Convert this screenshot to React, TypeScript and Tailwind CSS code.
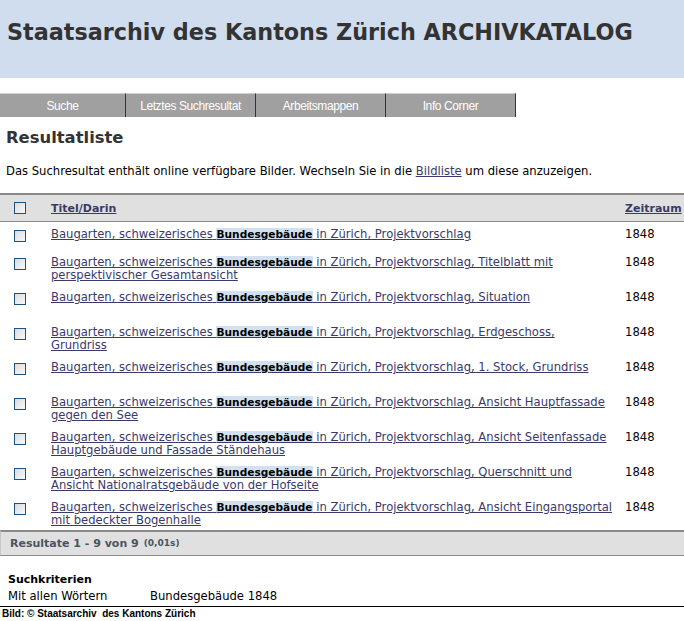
import React from 'react';

const rows: { rest: string; h: string }[] = [
  { rest: ' in Zürich, Projektvorschlag', h: 'h-[28px]' },
  { rest: ' in Zürich, Projektvorschlag, Titelblatt mit perspektivischer Gesamtansicht', h: 'h-[35px]' },
  { rest: ' in Zürich, Projektvorschlag, Situation', h: 'h-[35px]' },
  { rest: ' in Zürich, Projektvorschlag, Erdgeschoss, Grundriss', h: 'h-[35px]' },
  { rest: ' in Zürich, Projektvorschlag, 1. Stock, Grundriss', h: 'h-[35px]' },
  { rest: ' in Zürich, Projektvorschlag, Ansicht Hauptfassade gegen den See', h: 'h-[35px]' },
  { rest: ' in Zürich, Projektvorschlag, Ansicht Seitenfassade Hauptgebäude und Fassade Ständehaus', h: 'h-[35px]' },
  { rest: ' in Zürich, Projektvorschlag, Querschnitt und Ansicht Nationalratsgebäude von der Hofseite', h: 'h-[35px]' },
  { rest: ' in Zürich, Projektvorschlag, Ansicht Eingangsportal mit bedeckter Bogenhalle', h: 'h-[35px]' },
];

const Box = () => (
  <span className="block w-[12px] h-[12px] border border-[#1c5180] bg-gradient-to-br from-[#dcdcdc] to-[#f8f8f8]" />
);

const tabs = ['Suche', 'Letztes Suchresultat', 'Arbeitsmappen', 'Info Corner'];

export default function App() {
  return (
    <div className="w-[684px] h-[621px] bg-white overflow-hidden text-[#333] font-['DejaVu_Sans',sans-serif]">
      <header className="h-[78px] bg-[#cfddee] pl-[7px] pt-[18px]">
        <h1 className="text-[22.3px] leading-[28px] font-bold text-[#333]">
          Staatsarchiv des Kantons Zürich ARCHIVKATALOG
        </h1>
      </header>

      <nav className="mt-[15px] flex h-[24px] font-['Liberation_Sans',sans-serif] text-[12px] text-white tracking-[-0.4px]">
        {tabs.map((t) => (
          <a
            key={t}
            href="#"
            className="w-[130px] first:w-[126px] flex items-center justify-center bg-[#a0a0a0] border-t border-t-[#cfcfcf] border-r border-r-[#333]"
          >
            {t}
          </a>
        ))}
      </nav>

      <main className="px-[6px]">
        <h2 className="mt-[9px] text-[16.4px] font-bold leading-[24px] text-[#333]">Resultatliste</h2>
        <p className="mt-[14px] text-[11.6px] leading-[14px] text-black">
          Das Suchresultat enthält online verfügbare Bilder. Wechseln Sie in die{' '}
          <a href="#" className="underline text-[#3a3a6a]">Bildliste</a> um diese anzuzeigen.
        </p>
      </main>

      <div className="mt-[15px] text-[11.6px] leading-[13px]">
        <div className="h-[29px] flex items-center bg-[#e0e0e0] border-t-2 border-t-[#8a8a8a] border-b border-b-[#8a8a8a] text-[11px]">
          <div className="w-[51px] pl-[14px]"><Box /></div>
          <a href="#" className="flex-1 font-bold underline text-[#3a3a6a]">Titel/Darin</a>
          <a href="#" className="w-[59px] font-bold underline text-[#3a3a6a]">Zeitraum</a>
        </div>

        {rows.map((r, i) => (
          <div key={i} className={`${r.h} flex items-start pt-[6px]`}>
            <div className="w-[51px] pl-[14px] pt-[2px]"><Box /></div>
            <a href="#" className="w-[574px] pr-[12px] underline text-[#3a3a6a]">
              Baugarten, schweizerisches{' '}
              <b className="bg-[#d2e0f0] text-black text-[10.6px]">Bundesgebäude</b>
              {r.rest}
            </a>
            <span className="w-[59px] text-black">1848</span>
          </div>
        ))}

        <div className="h-[26px] flex items-center pl-[9px] bg-[#e0e0e0] border-t-2 border-t-[#8a8a8a] border-b border-b-[#8a8a8a] border-l border-l-[#c8c8c8] font-bold text-[#4a5560]">
          <span className="text-[11px]">Resultate 1 - 9 von 9</span>
          <span className="ml-[5px] text-[9px]">(0,01s)</span>
        </div>
      </div>

      <section className="pl-[8px] pt-[16px] text-[11.6px] leading-[16px] text-black">
        <div className="font-bold text-[11px]">Suchkriterien</div>
        <div className="flex">
          <span className="w-[142px]">Mit allen Wörtern</span>
          <span>Bundesgebäude 1848</span>
        </div>
      </section>

      <footer className="mt-[2px] border-t border-t-black pl-[2px] font-['Liberation_Sans',sans-serif] text-[10px] font-bold leading-[14px] text-black">
        Bild: © Staatsarchiv&nbsp; des Kantons Zürich
      </footer>
    </div>
  );
}
